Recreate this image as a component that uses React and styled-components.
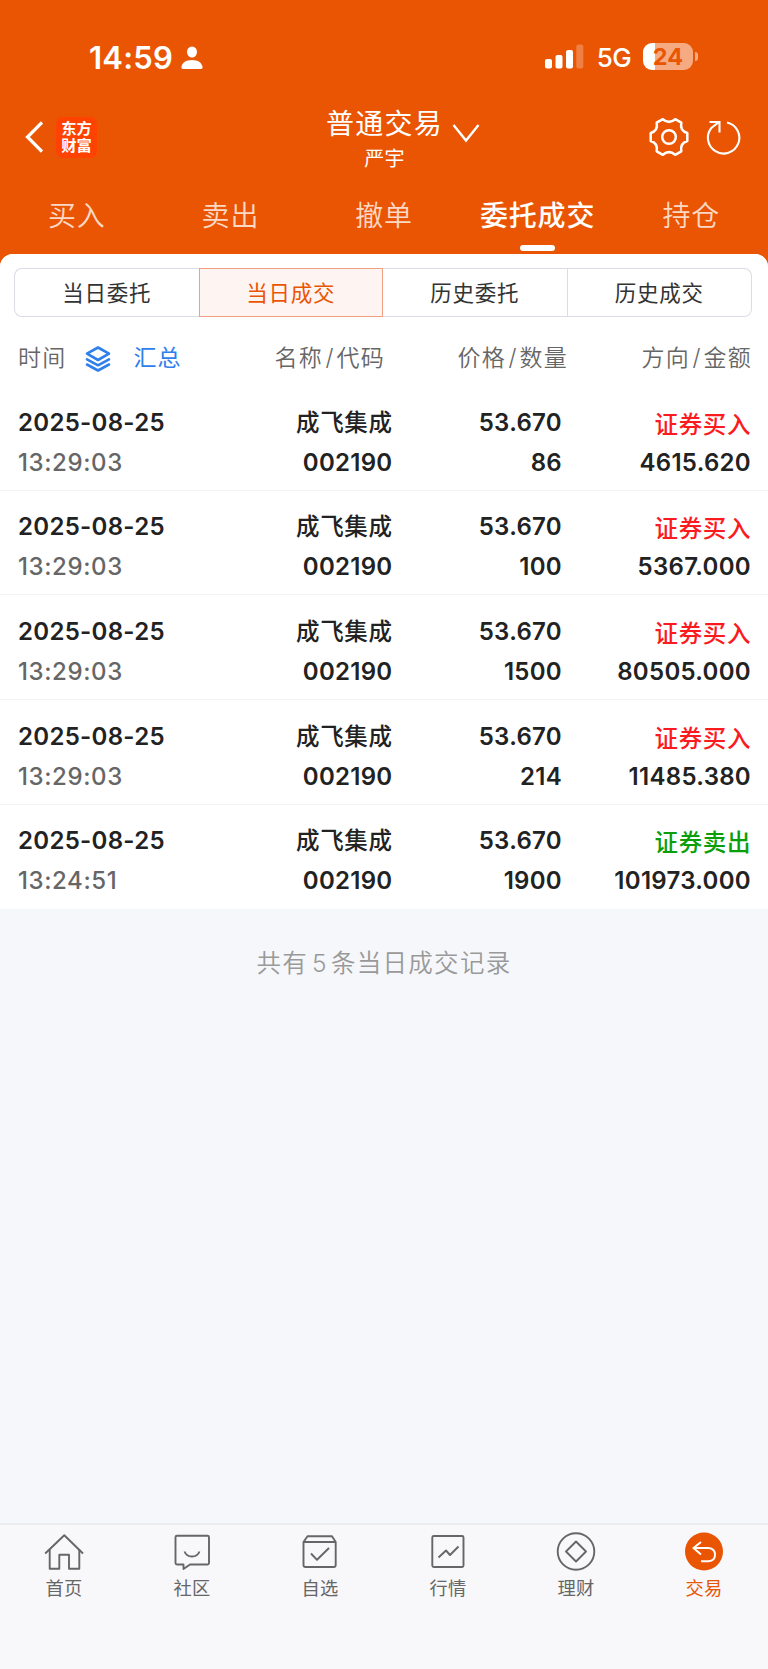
import React, { useState } from 'react';
import styled, { createGlobalStyle } from 'styled-components';

const GlobalStyle = createGlobalStyle`
  * {
    box-sizing: border-box;
  }

  body {
    margin: 0;
    background-color: #f6f7fa;
    font-family: Inter, "Noto Sans CJK SC", sans-serif;
  }

  svg {
    display: block;
    flex-shrink: 0;
  }
`;

const Page = styled.div`
  display: flex;
  flex-direction: column;
  width: 768px;
  height: 1669px;
  background-color: #ea5504;
  overflow: hidden;
`;

const StatusBar = styled.div`
  display: flex;
  align-items: center;
  height: 98px;
  padding: 17px 70px 0 89px;
  color: #fff;
`;

const Clock = styled.span`
  font-size: 31px;
  font-weight: 600;
  line-height: 40px;
  letter-spacing: 0.2px;
  margin-right: 8px;
`;

const StatusRight = styled.div`
  display: flex;
  align-items: center;
  margin-left: auto;
  margin-top: -2px;
`;

const Network = styled.span`
  font-size: 26px;
  font-weight: 500;
  line-height: 30px;
  letter-spacing: -0.6px;
  margin: 2px 12px 0 13px;
`;

const Battery = styled.div`
  display: flex;
  align-items: center;
  justify-content: center;
  width: 50px;
  height: 27px;
  border-radius: 9px;
  background: linear-gradient(to right, #fff 12px, #f5aa82 12px);
  color: #ea5504;
  font-size: 23.5px;
  font-weight: 700;
  line-height: 27px;
`;

const BatteryCap = styled.div`
  width: 3px;
  height: 9px;
  margin-left: 2px;
  border-radius: 0 3px 3px 0;
  background-color: #f5aa82;
`;

const Header = styled.header`
  display: grid;
  grid-template-columns: 1fr auto 1fr;
  align-items: center;
  height: 82px;
  padding: 0 27px 0 25px;
  color: #fff;
`;

const HeaderLeft = styled.div`
  display: flex;
  align-items: center;
  gap: 13px;
  padding-bottom: 4px;
`;

const Logo = styled.div`
  width: 41px;
  height: 41px;
  padding: 2px 5px 0;
  border-radius: 7px;
  background-color: #ff4200;
  font-family: "Noto Sans CJK SC", sans-serif;
  font-size: 15.3px;
  font-weight: 700;
  line-height: 17px;
  text-align: center;
  word-break: break-all;
`;

const Account = styled.div`
  display: flex;
  align-items: center;
  gap: 9px;
  padding-left: 40px;

  svg {
    margin-bottom: 12px;
  }
`;

const AccountText = styled.div`
  display: flex;
  flex-direction: column;
  align-items: center;
  padding-top: 2px;
`;

const AccountTitle = styled.h1`
  margin: 0;
  font-size: 28px;
  font-weight: 400;
  line-height: 38px;
  letter-spacing: 1.2px;
`;

const AccountName = styled.span`
  font-size: 20px;
  line-height: 32px;
  letter-spacing: 0.3px;
`;

const HeaderRight = styled.div`
  display: flex;
  align-items: center;
  justify-content: flex-end;
  gap: 17px;
  padding-bottom: 4px;
`;

const TopTabs = styled.nav`
  display: grid;
  grid-template-columns: repeat(5, 1fr);
  height: 74px;
`;

const TopTab = styled.button`
  display: flex;
  flex-direction: column;
  align-items: center;
  padding: 16px 0 0;
  border: none;
  background: none;
  color: ${({ $active }) => ($active ? '#fff' : '#fbd9c6')};
  font-family: inherit;
  font-size: 28px;
  font-weight: ${({ $active }) => ($active ? 500 : 350)};
  line-height: 40px;
  letter-spacing: 0.8px;
  white-space: nowrap;

  &::after {
    content: '';
    width: 35px;
    height: 6px;
    margin-top: 9px;
    border-radius: 3px;
    background-color: ${({ $active }) => ($active ? '#fff' : 'transparent')};
  }
`;

const Panel = styled.main`
  flex: 1;
  display: flex;
  flex-direction: column;
  border-radius: 13px 13px 0 0;
  background-color: #f6f7fa;
  overflow: hidden;
`;

const Sheet = styled.section`
  height: 655px;
  padding-top: 14px;
  background-color: #fff;
`;

const Segments = styled.div`
  display: grid;
  grid-template-columns: repeat(4, 1fr);
  height: 49px;
  margin: 0 16px 0 14px;
`;

const Segment = styled.button`
  padding: 0;
  border: 1px solid ${({ $active }) => ($active ? '#f0a080' : '#dadde5')};
  border-left-width: ${({ $joined }) => ($joined ? 0 : '1px')};
  border-right-width: ${({ $beforeActive }) => ($beforeActive ? 0 : '1px')};
  background-color: ${({ $active }) => ($active ? '#fef5f2' : '#fff')};
  color: ${({ $active }) => ($active ? '#ea5504' : '#333')};
  font-family: inherit;
  font-size: 21.5px;
  font-weight: 400;
  line-height: 46px;
  letter-spacing: 0.7px;

  &:first-child {
    border-radius: 8px 0 0 8px;
  }

  &:last-child {
    border-radius: 0 8px 8px 0;
  }
`;

const ListHead = styled.div`
  display: grid;
  grid-template-columns: 189px 178px 183px 1fr;
  align-items: center;
  height: 69px;
  padding: 12px 16px 0 18px;
  color: #666;
  font-size: 23px;
  font-weight: 350;
  line-height: 40px;
  letter-spacing: 1.2px;
`;

const HeadCell = styled.div`
  text-align: right;
  white-space: nowrap;
`;

const Slash = styled.span`
  margin: 0 2px 0 2.5px;
`;

const TimeCell = styled.div`
  display: flex;
  align-items: center;
  white-space: nowrap;
`;

const Summary = styled.a`
  display: flex;
  align-items: center;
  gap: 22px;
  margin-left: 19px;
  color: #2f80ed;
  font-weight: 400;

  svg {
    margin-top: 3px;
  }
`;

const Row = styled.div`
  display: grid;
  grid-template-columns: 200px 174.5px 169.5px 189px;
  height: 104.7px;
  padding: 16.5px 17px 0 18px;
  border-bottom: ${({ $last }) => ($last ? 'none' : '1px solid #f3f4f6')};
`;

const Cell = styled.div`
  display: flex;
  flex-direction: column;
  align-items: ${({ $left }) => ($left ? 'flex-start' : 'flex-end')};
`;

const Value = styled.span`
  color: ${({ $muted }) => ($muted ? '#666' : '#222')};
  font-size: 24px;
  font-weight: ${({ $muted }) => ($muted ? 550 : 600)};
  line-height: 40px;
  letter-spacing: ${({ $muted }) => ($muted ? '0.6px' : '0.3px')};
`;

const StockName = styled.span`
  color: #222;
  font-size: 23.5px;
  font-weight: 500;
  line-height: 40px;
  letter-spacing: 0.6px;
`;

const Direction = styled.span`
  height: 40px;
  padding-top: 2px;
  color: ${({ $sell }) => ($sell ? '#0a9f0a' : '#fb1a1e')};
  font-size: 23.5px;
  font-weight: 500;
  line-height: 40px;
  letter-spacing: 0.6px;
`;

const Total = styled.p`
  margin: 34px 0 0;
  color: #999;
  font-size: 24.5px;
  font-weight: 350;
  line-height: 40px;
  letter-spacing: 1.3px;
  text-align: center;
`;

const TotalCount = styled.span`
  margin: 0 3px 0 4px;
`;

const BottomBar = styled.nav`
  display: grid;
  grid-template-columns: repeat(6, 1fr);
  height: 146px;
  border-top: 2px solid #ebecf0;
  background-color: #f8f8fb;
`;

const BottomItem = styled.a`
  display: flex;
  flex-direction: column;
  align-items: center;
  padding-top: 7px;
  color: ${({ $active }) => ($active ? '#ea5504' : '#666')};
  font-size: 18.3px;
  line-height: 34px;
  letter-spacing: 0.3px;

  svg {
    margin-bottom: -1px;
  }
`;

const PersonIcon = () => (
  <svg width="22" height="23" viewBox="0 0 22 23" fill="#fff">
    <ellipse cx="11" cy="6" rx="5" ry="5.6" />
    <path d="M2.2 23C.6 23 .2 22 .5 20.6 1.3 16.8 5 14 11 14s9.7 2.8 10.5 6.6C21.8 22 21.4 23 19.8 23Z" />
  </svg>
);

const SignalIcon = () => (
  <svg width="39" height="25" viewBox="0 0 39 25" fill="#fff">
    <rect x="0" y="15" width="7" height="9.5" rx="2" />
    <rect x="10.5" y="11" width="7" height="13.5" rx="2" />
    <rect x="21" y="6" width="7" height="18.5" rx="2" />
    <rect x="31.3" y="0.5" width="7" height="24" rx="2" opacity="0.25" />
  </svg>
);

const BackIcon = () => (
  <svg width="18" height="32" viewBox="0 0 18 32" fill="none" stroke="#fff" strokeWidth="3.2">
    <path d="M17 1.5 2.5 16 17 30.5" />
  </svg>
);

const ChevronIcon = () => (
  <svg width="28" height="20" viewBox="0 0 28 20" fill="none" stroke="#fff" strokeWidth="2.4">
    <path d="M1.5 2 14 17.5 26.5 2" />
  </svg>
);

const GearIcon = () => (
  <svg width="40" height="40" viewBox="0 0 40 40" fill="none" stroke="#fff" strokeWidth="2.5" strokeLinejoin="round">
    <path d="M13.8 2.2Q20 7.500 26.200 2.200L32.300 5.700Q30.800 13.800 38.300 16V24Q30.800 26.200 32.300 34.300L26.200 37.800Q20 32.500 13.800 37.800L7.700 34.300Q9.200 26.200 1.700 24V16Q9.200 13.800 7.700 5.700Z" />
    <circle cx="20" cy="20" r="6.8" />
  </svg>
);

const RefreshIcon = () => (
  <svg width="35" height="35" viewBox="0 0 35 35" fill="none" stroke="#fff" strokeWidth="2.1">
    <path d="M21 2.5A15.7 15.7 0 1 1 5.800 7.500L12.500 2.500" />
    <path d="M3.5 2H13.5V12.5" />
  </svg>
);

const LayersIcon = () => (
  <svg width="26" height="26" viewBox="0 0 26 26" fill="none" stroke="#2f80ed" strokeWidth="2.6" strokeLinejoin="round" strokeLinecap="round">
    <path d="M13 1.5 24 7.7 13 14 2 7.7Z" />
    <path d="M2 13.3 13 19.3 24 13.3" />
    <path d="M2 18.5 13 24.5 24 18.5" />
  </svg>
);

const NavIcon = ({ children }) => (
  <svg width="40" height="40" viewBox="0 0 40 40" fill="none" stroke="#666" strokeWidth="1.9" strokeLinejoin="round">
    {children}
  </svg>
);

const navItems = [
  {
    label: '首页',
    icon: (
      <>
        <path d="M1.2 21.5 20.3 3.2 39 21.5" />
        <path d="M5.7 17.5V36.8H15.3V22.8H25V36.8H35.3V17.5" />
      </>
    ),
  },
  {
    label: '社区',
    icon: (
      <>
        <path d="M5 3.7H35.5Q37 3.7 37 5.2V31Q37 32.5 35.5 32.5H18L11.5 37V32.5H5Q3.5 32.5 3.5 31V5.2Q3.5 3.7 5 3.7Z" />
        <path d="M12.5 19.5Q14.5 24.5 20 24.5T27.5 19.5" />
      </>
    ),
  },
  {
    label: '自选',
    icon: (
      <>
        <path d="M3.5 10 7.5 4.3H32L35.7 10V33Q35.7 35 33.7 35H5.5Q3.5 35 3.5 33ZM3.5 10H35.7" />
        <path d="M11 21.5 17 27.8 29 16" />
      </>
    ),
  },
  {
    label: '行情',
    icon: (
      <>
        <rect x="4.3" y="4" width="31.2" height="31" rx="1.5" />
        <path d="M10.5 25.5 18 18.5 22 23 30.5 14.5" />
      </>
    ),
  },
  {
    label: '理财',
    icon: (
      <>
        <circle cx="20" cy="19.5" r="18.3" />
        <path d="M20 9.5 30 19.5 20 29.5 10 19.5Z" />
      </>
    ),
  },
  {
    label: '交易',
    icon: (
      <>
        <circle cx="20" cy="19.5" r="19" fill="#ea5504" stroke="none" />
        <path d="M17 10 9.5 16 17 22.5M10 16H24.5Q31 16.5 31 22.8T24.5 29.2H17" stroke="#fff" strokeLinejoin="miter" />
      </>
    ),
  },
];

const topTabs = ['买入', '卖出', '撤单', '委托成交', '持仓'];
const segments = ['当日委托', '当日成交', '历史委托', '历史成交'];
const columns = [
  ['名称', '代码'],
  ['价格', '数量'],
  ['方向', '金额'],
];

const deals = [
  { time: '13:29:03', count: '86', amount: '4615.620' },
  { time: '13:29:03', count: '100', amount: '5367.000' },
  { time: '13:29:03', count: '1500', amount: '80505.000' },
  { time: '13:29:03', count: '214', amount: '11485.380' },
  { time: '13:24:51', count: '1900', amount: '101973.000', sell: true },
];

function App() {
  const [tab, setTab] = useState(3);
  const [segment, setSegment] = useState(1);

  return (
    <Page>
      <GlobalStyle />
      <StatusBar>
        <Clock>14:59</Clock>
        <PersonIcon />
        <StatusRight>
          <SignalIcon />
          <Network>5G</Network>
          <Battery>24</Battery>
          <BatteryCap />
        </StatusRight>
      </StatusBar>
      <Header>
        <HeaderLeft>
          <BackIcon />
          <Logo>东方财富</Logo>
        </HeaderLeft>
        <Account>
          <AccountText>
            <AccountTitle>普通交易</AccountTitle>
            <AccountName>严宇</AccountName>
          </AccountText>
          <ChevronIcon />
        </Account>
        <HeaderRight>
          <GearIcon />
          <RefreshIcon />
        </HeaderRight>
      </Header>
      <TopTabs>
        {topTabs.map((label, i) => (
          <TopTab key={label} $active={i === tab} onClick={() => setTab(i)}>
            {label}
          </TopTab>
        ))}
      </TopTabs>
      <Panel>
        <Sheet>
          <Segments>
            {segments.map((label, i) => (
              <Segment
                key={label}
                $active={i === segment}
                $joined={i > 0 && i !== segment}
                $beforeActive={i + 1 === segment}
                onClick={() => setSegment(i)}
              >
                {label}
              </Segment>
            ))}
          </Segments>
          <ListHead>
            <TimeCell>
              时间
              <Summary>
                <LayersIcon />
                汇总
              </Summary>
            </TimeCell>
            {columns.map(([first, second]) => (
              <HeadCell key={first}>
                {first}
                <Slash>/</Slash>
                {second}
              </HeadCell>
            ))}
          </ListHead>
          {deals.map((deal, i) => (
            <Row key={i} $last={i === deals.length - 1}>
              <Cell $left>
                <Value>2025-08-25</Value>
                <Value $muted>{deal.time}</Value>
              </Cell>
              <Cell>
                <StockName>成飞集成</StockName>
                <Value>002190</Value>
              </Cell>
              <Cell>
                <Value>53.670</Value>
                <Value>{deal.count}</Value>
              </Cell>
              <Cell>
                <Direction $sell={deal.sell}>{deal.sell ? '证券卖出' : '证券买入'}</Direction>
                <Value>{deal.amount}</Value>
              </Cell>
            </Row>
          ))}
        </Sheet>
        <Total>
          共有<TotalCount>5</TotalCount>条当日成交记录
        </Total>
      </Panel>
      <BottomBar>
        {navItems.map(({ label, icon }) => (
          <BottomItem key={label} $active={label === '交易'}>
            <NavIcon>{icon}</NavIcon>
            {label}
          </BottomItem>
        ))}
      </BottomBar>
    </Page>
  );
}

export default App;
